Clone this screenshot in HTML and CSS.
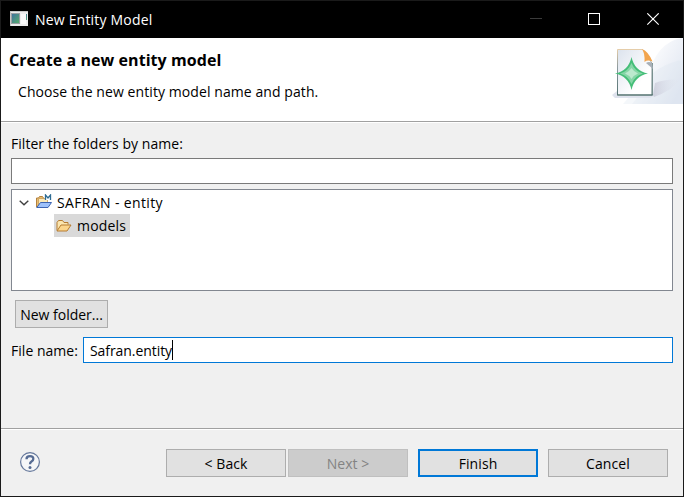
FILE: index.html
```html
<!DOCTYPE html>
<html lang="en">
<head>
<meta charset="utf-8">
<title>New Entity Model</title>
<link rel="stylesheet" href="styles.css">
</head>
<body>
<div class="window">
  <div class="titlebar">
    <svg class="app-icon" width="18" height="15" viewBox="0 0 18 15">
      <defs><linearGradient id="app" x1="0" y1="0" x2="1" y2="1"><stop offset="0" stop-color="#3e6fa0"/><stop offset="1" stop-color="#58b06c"/></linearGradient></defs>
      <rect width="18" height="15" fill="#ececec"/><path d="M0 .5h18M.5 0v15" stroke="#c9c9c9"/>
      <rect x="1.500" y="2.500" width="8" height="10" fill="url(#app)" stroke="#999fa3"/>
      <rect x="11" y="3" width="5" height="10" fill="#f9f9f9"/><rect x="16" y="3" width="1" height="6" fill="url(#app)"/>
    </svg>
    <span class="title"><span class="t-title">New Entity Model</span></span>
    <svg class="controls" width="130" height="13" viewBox="0 0 130 13" fill="none">
      <path d="M0 5.500h12" stroke="#3b3b3b"/>
      <rect x="58.500" y=".5" width="11" height="11" stroke="#fff"/>
      <path d="M117.300.300l11.400 11.400M128.700.300l-11.400 11.400" stroke="#fff" stroke-width="1.100"/>
    </svg>
  </div>
  <header class="header">
    <div class="heading">
      <h1><span class="t-head">Create a new entity model</span></h1>
      <p><span class="t-desc">Choose the new entity model name and path.</span></p>
    </div>
    <svg class="banner" width="75" height="66" viewBox="0 0 75 66">
      <defs>
        <linearGradient id="sweep" x1="0" y1="0" x2="1" y2=".7"><stop offset=".25" stop-color="#fff"/><stop offset="1" stop-color="#e0e6f1"/></linearGradient>
        <linearGradient id="page" x1="0" y1="0" x2="1" y2="1"><stop offset="0" stop-color="#dce3ed"/><stop offset=".7" stop-color="#fff"/></linearGradient>
        <linearGradient id="edge" x1="0" y1="0" x2="0" y2="1"><stop offset="0" stop-color="#e5cda9"/><stop offset=".4" stop-color="#8c9a9f"/><stop offset="1" stop-color="#52716f"/></linearGradient>
        <linearGradient id="shade"><stop offset="0" stop-color="#b4b2c5"/><stop offset="1" stop-color="#dfe2ee" stop-opacity="0"/></linearGradient>
      </defs>
      <path d="M24 66C43 48 39 5 75 0v66z" fill="url(#sweep)"/>
      <path d="M29 50Q51 25 75 22v44H15z" fill="#dbe3ef" opacity=".3"/>
      <path d="M45 57 47 45Q60 40 72 42Q63 53 46 59z" fill="url(#shade)" opacity=".5"/>
      <g transform="translate(4)">
        <path d="M0 57l5-4v5h36l-3 2H3z" fill="#dfe3ed"/>
        <path d="M5.500 11.500h25q5 5 9.500 14v31.500H5.500z" fill="url(#page)" stroke="url(#edge)"/>
        <path d="M40.500 25v32" stroke="#78908f"/>
        <path d="M5 57h36" stroke="#52716f"/>
        <path d="M30 11q6 2 10.500 12.500-5-2-8 .5.500-9-2.500-13z" fill="#f2a44d"/>
        <path d="M34 25q3-2 6 0l1 6z" fill="#a8b0b8"/>
        <path d="M19.500 19Q22.500 33 36 35.500 22.500 38 19.500 52 16.500 38 3 35.500 16.500 33 19.500 19z" fill="#45be78"/>
        <path d="M19.500 25Q23 33.500 31 35.500 23 37.500 19.500 46 16 37.500 8 35.500 16 33.500 19.500 25z" fill="#86d6a7"/>
        <path d="M19.500 30Q22 34 26 35.500 22 37 19.500 41 17 37 13 35.500 17 34 19.500 30z" fill="#bce9ce"/>
      </g>
    </svg>
  </header>
  <main class="content">
    <label class="filter-label"><span class="t-filter">Filter the folders by name:</span></label>
    <div class="field filter"></div>
    <div class="tree">
      <div class="row">
        <svg class="chevron" width="10" height="6" viewBox="0 0 10 6"><path d="M.7.700 5 4.700 9.300.7" fill="none" stroke="#404040" stroke-width="1.400"/></svg>
        <svg class="project" width="16" height="16" viewBox="0 0 16 16">
          <path d="M.5 4h2l1-1.500h3L7.500 4V13H.5z" fill="#e9bd70" stroke="#b4813d"/>
          <path d="M2.500 4.500h9v7h-9z" fill="#fae9b9" stroke="#c79c58" stroke-width=".8"/>
          <path d="M4.500 8.500h11l-3.500 5H.8z" fill="#9ec1fa" stroke="#3d64b1"/>
          <path d="M9.500 6V1l2.500 3L14.500 1v5" fill="#fff" stroke="#2d6b92" stroke-width="1.300"/>
        </svg>
        <span class="t-root">SAFRAN - entity</span>
      </div>
      <div class="row selected">
        <svg class="folder" width="16" height="12" viewBox="0 0 16 12">
          <path d="M1 10.500V2.500l1.500-2h4l1.500 2h4v2" fill="#fbe6b0" stroke="#b67c32"/>
          <path d="M1 11l4-6h10l-4 6z" fill="#fbd58c" stroke="#b67c32" stroke-linejoin="round"/>
        </svg>
        <span class="t-models">models</span>
      </div>
    </div>
    <div class="button new-folder"><span class="t-newf">New folder...</span></div>
    <div class="file-row">
      <label><span class="t-file">File name:</span></label>
      <div class="field file"><span class="t-value">Safran.entity</span><i class="caret"></i></div>
    </div>
  </main>
  <footer class="footer">
    <svg class="help" width="22" height="22" viewBox="0 0 22 22">
      <circle cx="11" cy="11" r="9.400" fill="#f5f6f8" stroke="#64779b" stroke-width="1.200"/>
      <path d="M7.500 8.200Q7.500 5.200 11 5.200T14.300 8Q14.300 9.600 12.500 10.600 11 11.400 11 13.200" fill="none" stroke="#566b93" stroke-width="2.300"/>
      <circle cx="11" cy="16.400" r="1.500" fill="#566b93"/>
    </svg>
    <div class="button back"><span class="t-back">&lt; Back</span></div>
    <div class="button next"><span class="t-next">Next &gt;</span></div>
    <div class="button finish"><span class="t-finish">Finish</span></div>
    <div class="button cancel"><span class="t-cancel">Cancel</span></div>
  </footer>
</div>
</body>
</html>
```
FILE: styles.css
```css
* { box-sizing: border-box; }
body { margin: 0; font: 14px/20px "Open Sans", "Noto Sans", sans-serif; color: #000; }
.window { width: 684px; height: 497px; border: 1px solid #1a1a1a; background: #f0f0f0; display: flex; flex-direction: column; white-space: nowrap; overflow: hidden; }
.titlebar { height: 37px; flex: none; background: #000; color: #fff; display: flex; align-items: center; padding: 0 23px 0 9px; }
.app-icon { margin-top: -2px; }
.title { margin-left: 7px; flex: 1; letter-spacing: .19px; }
.header { height: 85px; flex: none; background: #fff; border-bottom: 1px solid #fff; box-shadow: inset 0 -1px #a0a0a0; display: flex; justify-content: space-between; }
.heading { padding: 12px 0 0 8px; }
h1 { margin: 0; font-size: 16px; line-height: 20px; font-weight: 700; letter-spacing: .06px; }
p { margin: 12px 0 0 9px; letter-spacing: .08px; }
.content { flex: 1; padding: 11px 10px 0; display: flex; flex-direction: column; align-items: flex-start; }
.field { background: #fff; border: 1px solid #7a7a7a; height: 26px; }
.filter { width: 100%; margin-top: 4px; }
.filter-label { height: 20px; letter-spacing: .04px; }
.tree { width: 100%; height: 102px; margin-top: 5px; padding: 1px 0 0 7px; background: #fff; border: 1px solid #828790; }
.row { height: 23px; display: flex; align-items: center; }
.project { margin: -2px 5px 0 7px; }
.t-root { letter-spacing: .36px; }
.t-models { letter-spacing: .18px; }
.selected { width: 76px; margin-left: 35px; padding-left: 2px; background: #d9d9d9; }
.folder { margin-right: 5px; }
.button { height: 28px; padding-top: 1px; background: #e1e1e1; border: 1px solid #adadad; display: flex; align-items: center; justify-content: center; }
.new-folder { width: 93px; margin: 9px 0 0 4px; padding-top: 2px; }
.file-row { width: 100%; margin-top: 9px; display: flex; align-items: center; }
.file-row label { width: 72px; flex: none; padding-top: 1px; letter-spacing: .03px; }
.file { flex: 1; display: flex; align-items: center; padding-left: 6px; border-color: #0078d7; }
.t-value { padding-top: 2px; letter-spacing: -.07px; }
.caret { width: 1px; height: 20px; background: #000; }
.footer { height: 67px; flex: none; border-top: 1px solid #fff; box-shadow: 0 -1px #a0a0a0; padding: 19px 15px 0 18px; display: flex; align-items: flex-start; }
.help { margin: 2px auto 0 0; }
.footer .button { width: 120px; padding-top: 2px; }
.t-back, .t-finish, .t-cancel { letter-spacing: .1px; }
.next { margin: 0 10px 0 2px; background: #ccc; border-color: #bfbfbf; color: #838383; }
.footer .finish { border: 2px solid #0078d7; margin-right: 10px; }
```
